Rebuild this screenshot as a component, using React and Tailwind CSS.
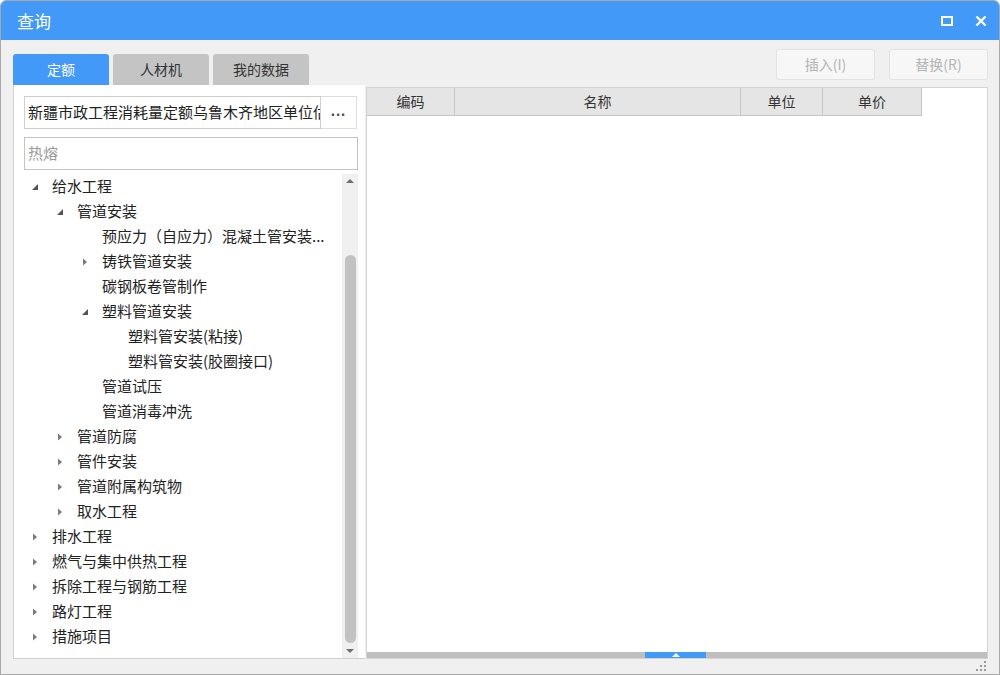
import React from "react";

const font = { fontFamily: '"Noto Sans CJK SC", "Noto Sans", sans-serif' };

function Expanded() {
  return (
    <svg width="8" height="8" viewBox="0 0 8 8" className="shrink-0">
      <polygon points="7,1 7,7 1,7" fill="#555" />
    </svg>
  );
}
function Collapsed() {
  return (
    <svg width="8" height="8" viewBox="0 0 8 8" className="shrink-0">
      <polygon points="2,0.5 6,4 2,7.5" fill="#7a7a7a" />
    </svg>
  );
}

const tree = [
  { l: 0, t: "给水工程", s: "e" },
  { l: 1, t: "管道安装", s: "e" },
  { l: 2, t: "预应力（自应力）混凝土管安装...", s: "n" },
  { l: 2, t: "铸铁管道安装", s: "c" },
  { l: 2, t: "碳钢板卷管制作", s: "n" },
  { l: 2, t: "塑料管道安装", s: "e" },
  { l: 3, t: "塑料管安装(粘接)", s: "n" },
  { l: 3, t: "塑料管安装(胶圈接口)", s: "n" },
  { l: 2, t: "管道试压", s: "n" },
  { l: 2, t: "管道消毒冲洗", s: "n" },
  { l: 1, t: "管道防腐", s: "c" },
  { l: 1, t: "管件安装", s: "c" },
  { l: 1, t: "管道附属构筑物", s: "c" },
  { l: 1, t: "取水工程", s: "c" },
  { l: 0, t: "排水工程", s: "c" },
  { l: 0, t: "燃气与集中供热工程", s: "c" },
  { l: 0, t: "拆除工程与钢筋工程", s: "c" },
  { l: 0, t: "路灯工程", s: "c" },
  { l: 0, t: "措施项目", s: "c" },
];

const padMap = ["pl-[7px]", "pl-[32px]", "pl-[57px]", "pl-[83px]"];

export default function App() {
  return (
    <div
      className="w-[1000px] h-[675px] flex flex-col bg-[#f0f0f0] border border-[#a8a8a8] rounded-t-[6px] overflow-hidden"
      style={font}
    >
      {/* title bar */}
      <div className="h-[39px] shrink-0 bg-[#4399f8] flex items-center justify-between pl-[16px] pr-[12px]">
        <span className="text-white text-[17px] leading-none">查询</span>
        <div className="flex items-center gap-[22px]">
          <svg width="12" height="10" viewBox="0 0 12 10">
            <rect x="1" y="1" width="10" height="8" fill="none" stroke="#fff" strokeWidth="2" />
          </svg>
          <svg width="12" height="12" viewBox="0 0 12 12">
            <path d="M1.5 1.5 L10.5 10.5 M10.5 1.5 L1.5 10.5" stroke="#fff" strokeWidth="2.4" />
          </svg>
        </div>
      </div>

      {/* body */}
      <div className="flex-1 flex flex-col pl-[12px] pr-[11px]">
        <div className="h-[45px] shrink-0 flex justify-between">
          <div className="flex items-end gap-[4px]">
            <div className="w-[96px] h-[31px] rounded-t-[3px] bg-[#4399f8] text-white text-[14px] flex items-center justify-center">定额</div>
            <div className="w-[96px] h-[31px] rounded-t-[3px] bg-[#c4c4c4] text-[#333] text-[14px] flex items-center justify-center">人材机</div>
            <div className="w-[96px] h-[31px] rounded-t-[3px] bg-[#c4c4c4] text-[#333] text-[14px] flex items-center justify-center">我的数据</div>
          </div>
          <div className="flex items-start gap-[14px] pt-[9px]">
            <div className="w-[99px] h-[31px] rounded-[3px] border border-[#e2e2e2] bg-[#f7f7f7] text-[#b4b4b4] text-[14px] flex items-center justify-center">插入(I)</div>
            <div className="w-[99px] h-[31px] rounded-[3px] border border-[#e2e2e2] bg-[#f7f7f7] text-[#b4b4b4] text-[14px] flex items-center justify-center">替换(R)</div>
          </div>
        </div>

        <div className="h-[574px] shrink-0 flex gap-[1px]">
          {/* left panel */}
          <div className="w-[352px] h-full bg-white border-l border-b border-[#cfcfcf] flex flex-col pl-[10px] pr-[7px]">
            <div className="mt-[11px] h-[33px] flex">
              <div className="w-[297px] h-full border border-[#cfcfcf] overflow-hidden text-[15px] text-[#222] pl-[3px] flex items-center">
                <span className="whitespace-nowrap">新疆市政工程消耗量定额乌鲁木齐地区单位估</span>
              </div>
              <div className="w-[36px] h-full border border-l-0 border-[#dedede] flex items-center justify-center text-[#444] text-[13px] font-bold tracking-[1px] leading-none pb-[4px]">...</div>
            </div>
            <div className="mt-[8px] h-[33px] border border-[#c4c4c4] text-[15px] text-[#9a9a9a] pl-[3px] flex items-center">热熔</div>
            <div className="mt-[4px] flex-1 flex min-h-0">
              <div className="flex-1 flex flex-col">
                {tree.map((n, i) => (
                  <div key={i} className={"h-[25px] flex items-center gap-[13px] text-[15px] text-[#222] whitespace-nowrap " + padMap[n.l]}>
                    <span className="w-[8px] flex items-center">
                      {n.s === "e" ? <Expanded /> : n.s === "c" ? <Collapsed /> : null}
                    </span>
                    <span>{n.t}</span>
                  </div>
                ))}
              </div>
              <div className="w-[16px] h-full bg-[#f0f0f0] flex flex-col items-center">
                <svg width="10" height="12" viewBox="0 0 10 12" className="mt-[1px]">
                  <polygon points="1,8 5,4 9,8" fill="#6e6e6e" />
                </svg>
                <div className="mt-[68px] w-[11px] h-[388px] rounded-[6px] bg-[#c2c2c2]"></div>
                <svg width="10" height="10" viewBox="0 0 10 10" className="mt-[3px]">
                  <polygon points="1,3 9,3 5,7" fill="#6e6e6e" />
                </svg>
              </div>
            </div>
          </div>

          {/* right panel */}
          <div className="flex-1 h-full flex flex-col pt-[2px]">
            <div className="flex-1 bg-white border border-[#d4d4d4] flex flex-col">
              <div className="flex h-[28px]">
                {[
                  ["编码", "w-[88px]"],
                  ["名称", "w-[286px]"],
                  ["单位", "w-[82px]"],
                  ["单价", "w-[99px]"],
                ].map(([t, w], i) => (
                  <div key={i} className={"h-full bg-[#e5e5e5] border-r border-b border-[#c6c6c6] text-[14px] text-[#333] flex items-center justify-center " + w}>
                    {t}
                  </div>
                ))}
              </div>
              <div className="flex-1"></div>
              <div className="h-[6px] bg-[#bfbfbf] flex">
                <div className="ml-[278px] w-[61px] h-full bg-[#4399f8] flex items-center justify-center">
                  <svg width="8" height="4" viewBox="0 0 8 4">
                    <polygon points="0,4 4,0 8,4" fill="#fff" />
                  </svg>
                </div>
              </div>
            </div>
          </div>
        </div>

        <div className="flex-1 flex justify-end items-end pb-[2px] pr-[1px]">
          <svg width="12" height="12" viewBox="0 0 12 12">
            {[[9, 1], [5, 5], [9, 5], [1, 9], [5, 9], [9, 9]].map(([x, y], i) => (
              <rect key={i} x={x} y={y} width="2" height="2" fill="#9a9a9a" />
            ))}
          </svg>
        </div>
      </div>
    </div>
  );
}
